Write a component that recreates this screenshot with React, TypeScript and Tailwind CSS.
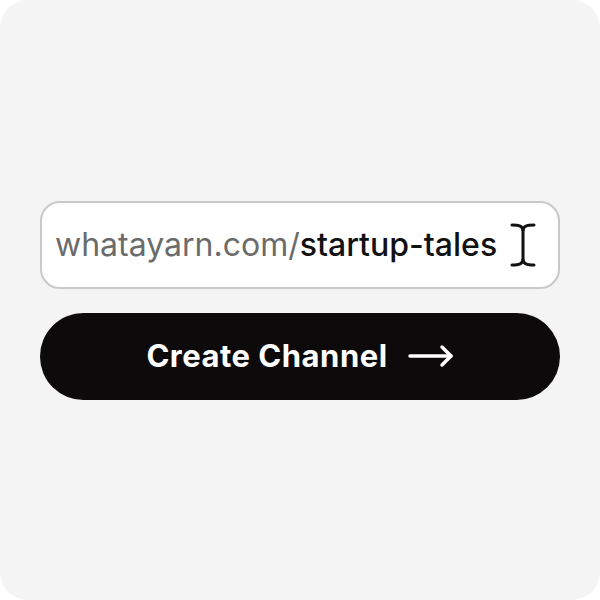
import React from "react";

export default function App() {
  return (
    <div className="w-[600px] h-[600px] bg-white">
      <div
        className="w-[600px] h-[600px] rounded-[28px] bg-[#f4f4f4] flex flex-col justify-center px-[40px] gap-[24px]"
        style={{ fontFamily: "Inter, 'Noto Sans', sans-serif" }}
      >
        <div className="h-[88px] rounded-[20px] border-2 border-[#c9c9c9] bg-white flex items-center pl-[13px] pr-[22px]">
          <span className="text-[32px] text-[#6b6b6b]">whatayarn.com/</span>
          <span className="text-[32px] font-medium text-[#111]">startup-tales</span>
          <svg width="26" height="46" viewBox="0 0 26 46" className="ml-auto" fill="none" stroke="#111" strokeWidth="3" strokeLinecap="round">
            <path d="M2 3 C9 3 13 4 13 9 C13 4 17 3 24 3" />
            <path d="M13 9 V37" />
            <path d="M2 43 C9 43 13 42 13 37 C13 42 17 43 24 43" />
          </svg>
        </div>
        <button className="h-[87px] rounded-full bg-[#0c0a0a] text-white flex items-center justify-center gap-[20px]">
          <span className="text-[31px] font-bold tracking-[0.5px]">Create Channel</span>
          <svg width="46" height="24" viewBox="0 0 46 24" fill="none" stroke="white" strokeWidth="3.5" strokeLinecap="round" strokeLinejoin="round">
            <path d="M2 12 H43" />
            <path d="M34 3 L43 12 L34 21" />
          </svg>
        </button>
      </div>
    </div>
  );
}
